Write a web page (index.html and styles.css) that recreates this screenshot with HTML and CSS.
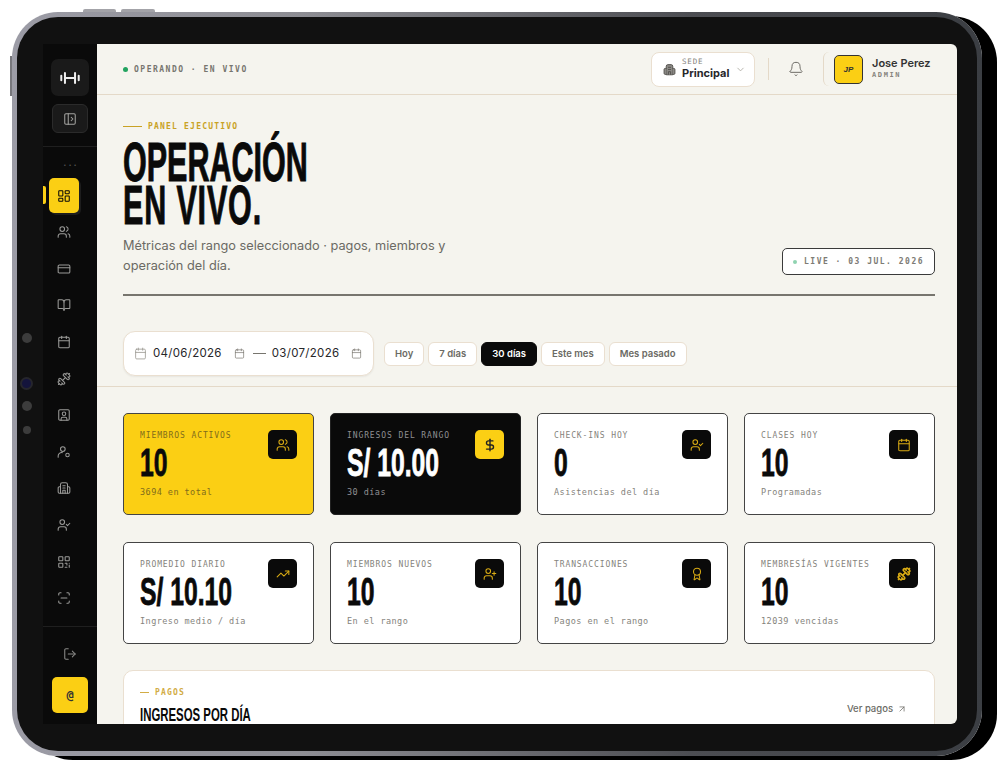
FILE: index.html
```html
<!DOCTYPE html>
<html lang="es">
<head>
  <meta charset="UTF-8" />
  <title>Panel ejecutivo</title>
  <link rel="stylesheet" href="styles.css">
</head>
<body>
  <svg class="sprite" xmlns="http://www.w3.org/2000/svg">
    <symbol id="i-panel" viewBox="0 0 24 24"><rect x="3" y="3" width="18" height="18" rx="2"/><path d="M9 3v18"/><path d="m14 9 3 3-3 3"/></symbol>
    <symbol id="i-dash" viewBox="0 0 24 24"><rect x="3" y="3" width="7" height="9" rx="1"/><rect x="14" y="3" width="7" height="5" rx="1"/><rect x="14" y="12" width="7" height="9" rx="1"/><rect x="3" y="16" width="7" height="5" rx="1"/></symbol>
    <symbol id="i-users" viewBox="0 0 24 24"><path d="M16 21v-2a4 4 0 0 0-4-4H6a4 4 0 0 0-4 4v2"/><circle cx="9" cy="7" r="4"/><path d="M22 21v-2a4 4 0 0 0-3-3.87"/><path d="M16 3.13a4 4 0 0 1 0 7.75"/></symbol>
    <symbol id="i-card" viewBox="0 0 24 24"><rect x="2" y="5" width="20" height="14" rx="2"/><path d="M2 10h20"/></symbol>
    <symbol id="i-book" viewBox="0 0 24 24"><path d="M12 7v14"/><path d="M3 18a1 1 0 0 1-1-1V4a1 1 0 0 1 1-1h5a4 4 0 0 1 4 4 4 4 0 0 1 4-4h5a1 1 0 0 1 1 1v13a1 1 0 0 1-1 1h-6a3 3 0 0 0-3 3 3 3 0 0 0-3-3z"/></symbol>
    <symbol id="i-cal" viewBox="0 0 24 24"><path d="M8 2v4"/><path d="M16 2v4"/><rect x="3" y="4" width="18" height="18" rx="2"/><path d="M3 10h18"/></symbol>
    <symbol id="i-gym" viewBox="0 0 24 24"><path d="M14.4 14.4 9.6 9.6"/><path d="M18.657 21.485a2 2 0 1 1-2.829-2.828l-1.767 1.768a2 2 0 1 1-2.829-2.829l6.364-6.364a2 2 0 1 1 2.829 2.829l-1.768 1.767a2 2 0 1 1 2.828 2.829z"/><path d="m21.5 21.5-1.4-1.4"/><path d="M3.9 3.9 2.5 2.5"/><path d="M6.404 12.768a2 2 0 1 1-2.828-2.829l1.767-1.768a2 2 0 1 1-2.828-2.829l2.828-2.828a2 2 0 1 1 2.829 2.828l1.767-1.768a2 2 0 1 1 2.829 2.829z"/></symbol>
    <symbol id="i-contact" viewBox="0 0 24 24"><rect x="3" y="3" width="18" height="18" rx="2"/><circle cx="12" cy="10" r="3"/><path d="M7 21v-2a3 3 0 0 1 3-3h4a3 3 0 0 1 3 3v2"/></symbol>
    <symbol id="i-cog" viewBox="0 0 24 24"><circle cx="10" cy="7" r="4"/><path d="M2 21v-2a6 6 0 0 1 7-5.9"/><circle cx="18" cy="17" r="3"/></symbol>
    <symbol id="i-build" viewBox="0 0 24 24"><path d="M6 21V6a3 3 0 0 1 3-3h6a3 3 0 0 1 3 3v15z"/><path d="M6 10H4a2 2 0 0 0-2 2v7a2 2 0 0 0 2 2h2"/><path d="M18 10h2a2 2 0 0 1 2 2v7a2 2 0 0 1-2 2h-2"/><path d="M10 8h4M10 12h4M10 21v-5h4v5"/></symbol>
    <symbol id="i-ucheck" viewBox="0 0 24 24"><path d="M16 21v-2a4 4 0 0 0-4-4H6a4 4 0 0 0-4 4v2"/><circle cx="9" cy="7" r="4"/><path d="m16 11 2 2 4-4"/></symbol>
    <symbol id="i-qr" viewBox="0 0 24 24"><rect x="3" y="3" width="7" height="7" rx="1"/><rect x="14" y="3" width="7" height="7" rx="1"/><rect x="3" y="14" width="7" height="7" rx="1"/><path d="M14 14h3v3M21 14v.01M14 21h3M21 17v4"/></symbol>
    <symbol id="i-scan" viewBox="0 0 24 24"><path d="M3 7V5a2 2 0 0 1 2-2h2"/><path d="M17 3h2a2 2 0 0 1 2 2v2"/><path d="M21 17v2a2 2 0 0 1-2 2h-2"/><path d="M7 21H5a2 2 0 0 1-2-2v-2"/><path d="M7 12h10"/></symbol>
    <symbol id="i-logout" viewBox="0 0 24 24"><path d="M9 21H5a2 2 0 0 1-2-2V5a2 2 0 0 1 2-2h4"/><path d="m16 17 5-5-5-5"/><path d="M21 12H9"/></symbol>
    <symbol id="i-bell" viewBox="0 0 24 24"><path d="M10.27 21a2 2 0 0 0 3.46 0"/><path d="M3.26 15.33A1 1 0 0 0 4 17h16a1 1 0 0 0 .74-1.67C19.41 13.96 18 12.5 18 8A6 6 0 0 0 6 8c0 4.5-1.41 5.96-2.74 7.33"/></symbol>
    <symbol id="i-chev" viewBox="0 0 24 24"><path d="m6 9 6 6 6-6"/></symbol>
    <symbol id="i-dollar" viewBox="0 0 24 24"><path d="M12 2v20"/><path d="M17 5H9.5a3.5 3.5 0 0 0 0 7h5a3.5 3.5 0 0 1 0 7H6"/></symbol>
    <symbol id="i-trend" viewBox="0 0 24 24"><path d="m22 7-8.5 8.5-5-5L2 17"/><path d="M16 7h6v6"/></symbol>
    <symbol id="i-uplus" viewBox="0 0 24 24"><path d="M16 21v-2a4 4 0 0 0-4-4H6a4 4 0 0 0-4 4v2"/><circle cx="9" cy="7" r="4"/><path d="M19 8v6M22 11h-6"/></symbol>
    <symbol id="i-award" viewBox="0 0 24 24"><path d="m15.477 12.89 1.515 8.526a.5.5 0 0 1-.81.47l-3.58-2.687a1 1 0 0 0-1.197 0l-3.586 2.686a.5.5 0 0 1-.81-.469l1.514-8.526"/><circle cx="12" cy="8" r="6"/></symbol>
    <symbol id="i-arrow" viewBox="0 0 24 24"><path d="M7 7h10v10"/><path d="M7 17 17 7"/></symbol>
  </svg>

  <div class="device">
    <span class="hw-btn hw-vol-a"></span>
    <span class="hw-btn hw-vol-b"></span>
    <span class="hw-btn hw-side"></span>
    <span class="sensor sensor-a"></span>
    <span class="sensor sensor-cam"></span>
    <span class="sensor sensor-b"></span>
    <span class="sensor sensor-c"></span>

    <div class="screen">
      <aside class="sidebar">
        <div class="side-top">
          <div class="logo-btn">
            <svg class="logo-mark" viewBox="0 0 24 24"><path d="M7 12h10"/><path d="M6.5 6.5v11M17.5 6.5v11"/><path d="M2.5 9.5v5M21.5 9.5v5"/></svg>
          </div>
          <div class="toggle-btn"><svg class="ico"><use href="#i-panel"/></svg></div>
        </div>
        <div class="side-dots">···</div>
        <nav class="side-nav">
          <a class="nav-item active"><svg class="ico"><use href="#i-dash"/></svg></a>
          <a class="nav-item"><svg class="ico"><use href="#i-users"/></svg></a>
          <a class="nav-item"><svg class="ico"><use href="#i-card"/></svg></a>
          <a class="nav-item"><svg class="ico"><use href="#i-book"/></svg></a>
          <a class="nav-item"><svg class="ico"><use href="#i-cal"/></svg></a>
          <a class="nav-item"><svg class="ico flip"><use href="#i-gym"/></svg></a>
          <a class="nav-item"><svg class="ico"><use href="#i-contact"/></svg></a>
          <a class="nav-item"><svg class="ico"><use href="#i-cog"/></svg></a>
          <a class="nav-item"><svg class="ico"><use href="#i-build"/></svg></a>
          <a class="nav-item"><svg class="ico"><use href="#i-ucheck"/></svg></a>
          <a class="nav-item"><svg class="ico"><use href="#i-qr"/></svg></a>
          <a class="nav-item"><svg class="ico"><use href="#i-scan"/></svg></a>
        </nav>
        <div class="side-bottom">
          <a class="nav-item logout"><svg class="ico"><use href="#i-logout"/></svg></a>
          <div class="side-avatar">@</div>
        </div>
      </aside>

      <main class="main">
        <header class="topbar">
          <div class="status"><span class="status-dot"></span>OPERANDO · EN VIVO</div>
          <div class="top-right">
            <div class="sede">
              <svg class="ico sede-ico"><use href="#i-build"/></svg>
              <div class="sede-text">
                <span class="sede-label">SEDE</span>
                <span class="sede-name">Principal</span>
              </div>
              <svg class="ico sede-chev"><use href="#i-chev"/></svg>
            </div>
            <span class="top-sep"></span>
            <svg class="ico bell"><use href="#i-bell"/></svg>
            <div class="user">
              <div class="user-avatar">JP</div>
              <div class="user-text">
                <span class="user-name">Jose Perez</span>
                <span class="user-role">ADMIN</span>
              </div>
            </div>
          </div>
        </header>

        <section class="hero">
          <div class="eyebrow"><span class="eyebrow-line"></span>PANEL EJECUTIVO</div>
          <h1 class="hero-title"><span>OPERACIÓN</span><span>EN VIVO.</span></h1>
          <div class="hero-foot">
            <p class="hero-text">Métricas del rango seleccionado · pagos, miembros y operación del día.</p>
            <div class="live"><span class="live-dot"></span>LIVE · 03 JUL. 2026</div>
          </div>
        </section>

        <section class="filters">
          <div class="date-range">
            <svg class="ico date-ico"><use href="#i-cal"/></svg>
            <span class="date-val">04/06/2026</span>
            <svg class="ico date-mini"><use href="#i-cal"/></svg>
            <span class="date-dash"></span>
            <span class="date-val">03/07/2026</span>
            <svg class="ico date-mini"><use href="#i-cal"/></svg>
          </div>
          <div class="presets">
            <button class="preset">Hoy</button>
            <button class="preset">7 días</button>
            <button class="preset on">30 días</button>
            <button class="preset">Este mes</button>
            <button class="preset">Mes pasado</button>
          </div>
        </section>

        <section class="kpis">
          <article class="kpi yellow">
            <div class="kpi-label">MIEMBROS ACTIVOS</div>
            <div class="kpi-value">10</div>
            <div class="kpi-sub">3694 en total</div>
            <span class="kpi-icon"><svg class="ico"><use href="#i-users"/></svg></span>
          </article>
          <article class="kpi dark">
            <div class="kpi-label">INGRESOS DEL RANGO</div>
            <div class="kpi-value">S/ 10.00</div>
            <div class="kpi-sub">30 días</div>
            <span class="kpi-icon"><svg class="ico"><use href="#i-dollar"/></svg></span>
          </article>
          <article class="kpi">
            <div class="kpi-label">CHECK-INS HOY</div>
            <div class="kpi-value">0</div>
            <div class="kpi-sub">Asistencias del día</div>
            <span class="kpi-icon"><svg class="ico"><use href="#i-ucheck"/></svg></span>
          </article>
          <article class="kpi">
            <div class="kpi-label">CLASES HOY</div>
            <div class="kpi-value">10</div>
            <div class="kpi-sub">Programadas</div>
            <span class="kpi-icon"><svg class="ico"><use href="#i-cal"/></svg></span>
          </article>
          <article class="kpi">
            <div class="kpi-label">PROMEDIO DIARIO</div>
            <div class="kpi-value">S/ 10.10</div>
            <div class="kpi-sub">Ingreso medio / día</div>
            <span class="kpi-icon"><svg class="ico"><use href="#i-trend"/></svg></span>
          </article>
          <article class="kpi">
            <div class="kpi-label">MIEMBROS NUEVOS</div>
            <div class="kpi-value">10</div>
            <div class="kpi-sub">En el rango</div>
            <span class="kpi-icon"><svg class="ico"><use href="#i-uplus"/></svg></span>
          </article>
          <article class="kpi">
            <div class="kpi-label">TRANSACCIONES</div>
            <div class="kpi-value">10</div>
            <div class="kpi-sub">Pagos en el rango</div>
            <span class="kpi-icon"><svg class="ico"><use href="#i-award"/></svg></span>
          </article>
          <article class="kpi">
            <div class="kpi-label">MEMBRESÍAS VIGENTES</div>
            <div class="kpi-value">10</div>
            <div class="kpi-sub">12039 vencidas</div>
            <span class="kpi-icon"><svg class="ico flip thick"><use href="#i-gym"/></svg></span>
          </article>
        </section>

        <section class="panel">
          <div class="panel-head">
            <div>
              <div class="panel-tag"><span class="panel-tag-line"></span>PAGOS</div>
              <h2 class="panel-title">INGRESOS POR DÍA</h2>
            </div>
            <a class="panel-link">Ver pagos <svg class="ico"><use href="#i-arrow"/></svg></a>
          </div>
        </section>
      </main>
    </div>
  </div>
</body>
</html>
```

FILE: styles.css
```css
* {
  box-sizing: border-box;
}

body {
  margin: 0;
  width: 1000px;
  height: 770px;
  overflow: hidden;
  background: #fff;
  font-family: 'Inter', sans-serif;
  color: #0a0a0a;
}

.sprite {
  display: none;
}

.ico {
  display: block;
  width: 14px;
  height: 14px;
  fill: none;
  stroke: currentColor;
  stroke-width: 1.8;
  stroke-linecap: round;
  stroke-linejoin: round;
}

.flip {
  transform: scaleX(-1);
}

.thick {
  stroke-width: 2.8;
}

/* device frame */
.device {
  position: absolute;
  left: 12px;
  top: 12px;
  width: 970px;
  height: 744px;
  padding: 27px 20px 27px 26px;
  background: linear-gradient(#111, #111) padding-box,
    linear-gradient(90deg, #9c9ca6 0, #8d8d93 30%, #4c4d52 70%, #3b3e43 100%) border-box;
  border: 5px solid transparent;
  border-radius: 46px;
  box-shadow: 15px 4px 0 #000;
}

.hw-btn {
  position: absolute;
  background: #a3a3a8;
}

.hw-vol-a {
  left: 66px;
  top: -8px;
  width: 33px;
  height: 3px;
  border-radius: 2px 2px 0 0;
}

.hw-vol-b {
  left: 104px;
  top: -8px;
  width: 34px;
  height: 3px;
  border-radius: 2px 2px 0 0;
}

.hw-side {
  left: -7px;
  top: 39px;
  width: 2px;
  height: 40px;
  background: #77777c;
}

.sensor {
  position: absolute;
  left: 5px;
  width: 10px;
  height: 10px;
  border-radius: 50%;
  background: #3c3c3c;
}

.sensor-a { top: 316px; }
.sensor-b { top: 384px; }

.sensor-c {
  top: 409px;
  left: 6px;
  width: 8px;
  height: 8px;
}

.sensor-cam {
  top: 360px;
  left: 3px;
  width: 13px;
  height: 13px;
  background: #14143c;
  border: 2px solid #26262c;
}

.screen {
  display: flex;
  height: 100%;
  overflow: hidden;
  border-radius: 0 6px 6px 0;
  background: #f5f4ee;
}

/* sidebar */
.sidebar {
  flex: 0 0 54px;
  display: flex;
  flex-direction: column;
  background: #0a0a0a;
  color: #a3a3a0;
}

.side-top {
  flex: none;
  display: flex;
  flex-direction: column;
  align-items: center;
  gap: 8px;
  height: 103px;
  padding: 15px 0 0 0;
  border-bottom: 1px solid #1f1f1f;
}

.logo-btn {
  display: flex;
  align-items: center;
  justify-content: center;
  width: 38px;
  height: 37px;
  background: #1a1a1a;
  border-radius: 7px;
}

.logo-mark {
  width: 22px;
  height: 22px;
  fill: none;
  stroke: #eee;
  stroke-width: 2.2;
  stroke-linecap: round;
}

.toggle-btn {
  display: flex;
  align-items: center;
  justify-content: center;
  width: 36px;
  height: 29px;
  background: #1a1a1a;
  border: 1px solid #2b2b2b;
  border-radius: 6px;
}

.side-dots {
  flex: none;
  height: 31px;
  padding: 10px 0 0 2px;
  text-align: center;
  font-size: 11px;
  line-height: 16px;
  letter-spacing: 2px;
  color: #555;
}

.side-nav {
  flex: none;
  display: flex;
  flex-direction: column;
  align-items: center;
  height: 448px;
  padding-right: 12px;
}

.nav-item {
  position: relative;
  display: flex;
  align-items: center;
  justify-content: center;
  flex: 0 0 36.6px;
  width: 30px;
  color: #9a9a98;
}

.nav-item.active {
  flex-basis: 35px;
  margin-bottom: 1px;
  color: #0a0a0a;
  background: #fbcf14;
  border-radius: 5px;
  box-shadow: 2px 2px 0 #1d1d1d;
}

.nav-item.active::before {
  content: "";
  position: absolute;
  left: -6px;
  top: 8px;
  width: 3px;
  height: 18px;
  background: #fbcf14;
  border-radius: 0 2px 2px 0;
}

.side-bottom {
  display: flex;
  flex-direction: column;
  align-items: center;
  flex: 1;
  border-top: 1px solid #1f1f1f;
}

.logout {
  flex: 0 0 50px;
  padding-top: 4px;
  color: #8a8a88;
}

.side-avatar {
  width: 36px;
  height: 36px;
  line-height: 36px;
  text-align: center;
  background: #fbcf14;
  border-radius: 5px;
  font-family: 'DejaVu Sans Mono', monospace;
  font-size: 12px;
  font-weight: 700;
  color: #333;
}

/* main */
.main {
  flex: 1;
  min-width: 0;
  display: flex;
  flex-direction: column;
}

.topbar {
  flex: 0 0 51px;
  display: flex;
  align-items: center;
  justify-content: space-between;
  padding: 0 26px;
  border-bottom: 1px solid #e4d9c8;
}

.status {
  display: flex;
  align-items: center;
  font-family: 'DejaVu Sans Mono', monospace;
  font-size: 8px;
  font-weight: 700;
  letter-spacing: 1.5px;
  color: #77756e;
}

.status-dot {
  width: 5px;
  height: 5px;
  margin-right: 6px;
  background: #22a35f;
  border-radius: 50%;
}

.top-right {
  display: flex;
  align-items: center;
  margin-right: -4px;
}

.sede {
  display: flex;
  align-items: center;
  width: 104px;
  height: 35px;
  padding-left: 11px;
  background: #fff;
  border: 1.5px solid #eadfd0;
  border-radius: 8px;
}

.sede-ico {
  width: 13px;
  height: 13px;
  color: #55534f;
  fill: #8a8884;
}

.sede-text {
  display: flex;
  flex-direction: column;
  margin: -1px 0 0 6px;
}

.sede-label {
  font-family: 'DejaVu Sans Mono', monospace;
  font-size: 7.5px;
  line-height: 9px;
  letter-spacing: .8px;
  color: #85837c;
}

.sede-name {
  font-size: 11px;
  line-height: 14px;
  font-weight: 700;
  color: #27272a;
}

.sede-chev {
  width: 11px;
  height: 11px;
  margin-left: 6px;
  color: #aaa79f;
}

.top-sep {
  width: 1px;
  height: 22px;
  margin-left: 13px;
  background: #e4d9c8;
}

.bell {
  width: 16px;
  height: 16px;
  margin: 0 19px;
  stroke-width: 1.5;
  color: #6e6c66;
}

.user {
  display: flex;
  align-items: center;
  height: 34px;
  padding-left: 10px;
  border-left: 1px solid #e4d9c8;
  border-radius: 6px 0 0 6px;
  width: 112px;
}

.user-avatar {
  width: 29px;
  height: 29px;
  line-height: 27px;
  text-align: center;
  background: #fbcf14;
  border: 1px solid #333;
  border-radius: 5px;
  font-family: 'Liberation Sans', sans-serif;
  font-style: italic;
  font-size: 8px;
  font-weight: 700;
  color: #333;
}

.user-text {
  display: flex;
  flex-direction: column;
  margin: -1px 0 0 9px;
}

.user-name {
  font-size: 11px;
  line-height: 14px;
  font-weight: 600;
  color: #333;
  white-space: nowrap;
}

.user-role {
  font-family: 'DejaVu Sans Mono', monospace;
  font-size: 7px;
  line-height: 11px;
  font-weight: 700;
  letter-spacing: 1.6px;
  color: #85837c;
}

/* hero */
.hero {
  flex: none;
  margin: 0 22px 0 26px;
  padding-top: 26px;
  height: 201px;
  border-bottom: 2px solid #77756e;
}

.eyebrow {
  display: flex;
  align-items: center;
  font-family: 'DejaVu Sans Mono', monospace;
  font-size: 8px;
  line-height: 11px;
  font-weight: 700;
  letter-spacing: 1.2px;
  color: #c9a225;
}

.eyebrow-line {
  width: 19px;
  height: 1px;
  margin-right: 6px;
  background: #c9a225;
}

.hero-title {
  margin: 9px 0 0;
  font-family: 'Liberation Sans', sans-serif;
  font-size: 55px;
  line-height: 43px;
  font-weight: 700;
  color: #0a0a0a;
  -webkit-text-stroke: 1px #0a0a0a;
  transform: scaleX(.555);
  transform-origin: left;
}

.hero-title span {
  display: block;
}

.hero-title span + span {
  letter-spacing: 1.5px;
}

.hero-foot {
  display: flex;
  align-items: flex-end;
  justify-content: space-between;
  margin-top: 9px;
}

.hero-text {
  width: 340px;
  margin: 0;
  font-size: 12.75px;
  line-height: 20px;
  color: #6b6a64;
}

.live {
  display: flex;
  align-items: center;
  width: 153px;
  height: 27px;
  margin-bottom: 1px;
  padding-left: 10px;
  background: #fff;
  border: 1.5px solid #3a3a3a;
  border-radius: 5px;
  font-family: 'DejaVu Sans Mono', monospace;
  font-size: 8px;
  font-weight: 700;
  letter-spacing: 1.5px;
  color: #7d7b75;
}

.live-dot {
  width: 4px;
  height: 4px;
  margin-right: 7px;
  background: #8fd3b0;
  border-radius: 50%;
}

/* filters */
.filters {
  flex: none;
  display: flex;
  align-items: center;
  gap: 10px;
  height: 91px;
  padding: 24px 22px 0 26px;
  border-bottom: 1px solid #e4d9c8;
}

.date-range {
  display: flex;
  align-items: center;
  width: 251px;
  height: 45px;
  padding-left: 10px;
  background: #fff;
  border: 1.5px solid #eadfd0;
  border-radius: 12px;
  box-shadow: 0 1px 2px rgba(0, 0, 0, .06);
}

.date-ico {
  width: 13px;
  height: 13px;
  margin-right: 6px;
  stroke-width: 1.5;
  color: #9a9890;
}

.date-mini {
  width: 11px;
  height: 11px;
  margin: 0 8px 0 12px;
  stroke-width: 1.5;
  color: #77756e;
}

.date-dash {
  width: 13px;
  height: 1px;
  margin-right: 6px;
  background: #77756e;
}

.date-val {
  font-size: 11.5px;
  letter-spacing: .3px;
  color: #27272a;
}

.presets {
  display: flex;
  gap: 4px;
  margin-top: 1px;
}

.preset {
  height: 24px;
  padding: 0 10px;
  background: #fff;
  border: 1.5px solid #eadfd0;
  border-radius: 6px;
  font-family: 'Inter', sans-serif;
  font-size: 9.5px;
  font-weight: 600;
  color: #6b6a64;
}

.preset.on {
  background: #0a0a0a;
  border-color: #0a0a0a;
  color: #fff;
}

/* kpi cards */
.kpis {
  flex: none;
  display: grid;
  grid-template-columns: repeat(4, 191px);
  grid-auto-rows: 102px;
  column-gap: 16px;
  row-gap: 27px;
  margin: 26px 22px 0 26px;
}

.kpi {
  position: relative;
  padding: 17px 16px 0;
  background: #fff;
  border: 1.5px solid #444;
  border-radius: 5px;
}

.kpi-label {
  font-family: 'DejaVu Sans Mono', monospace;
  font-size: 8px;
  line-height: 10px;
  letter-spacing: .9px;
  color: #85837c;
}

.kpi-value {
  margin-top: 5px;
  font-family: 'Liberation Sans', sans-serif;
  font-size: 38px;
  line-height: 34px;
  font-weight: 700;
  white-space: nowrap;
  color: #0a0a0a;
  -webkit-text-stroke: .8px currentColor;
  transform: scaleX(.65);
  transform-origin: left;
}

.kpi-sub {
  margin-top: 6px;
  font-family: 'DejaVu Sans Mono', monospace;
  font-size: 8.5px;
  line-height: 12px;
  letter-spacing: .45px;
  color: #85837c;
}

.kpi-icon {
  position: absolute;
  top: 16px;
  right: 16px;
  display: flex;
  align-items: center;
  justify-content: center;
  width: 29px;
  height: 29px;
  background: #0a0a0a;
  border-radius: 5px;
  color: #d9ab14;
}

.kpi.yellow {
  background: #fbcf14;
}

.kpi.yellow .kpi-label,
.kpi.yellow .kpi-sub {
  color: #7f6c1c;
}

.kpi.dark {
  background: #0a0a0a;
  border-color: #222;
}

.kpi.dark .kpi-label,
.kpi.dark .kpi-sub {
  color: #8f8f92;
}

.kpi.dark .kpi-value {
  color: #fff;
}

.kpi.dark .kpi-icon {
  background: #fbcf14;
  color: #222;
}

.kpi.dark .ico {
  stroke-width: 2.4;
}

/* panel below the fold */
.panel {
  flex: none;
  margin: 26px 22px 0 26px;
  height: 120px;
  padding: 16px 27px 0 16px;
  background: #fff;
  border: 1.5px solid #eadfd0;
  border-radius: 10px;
}

.panel-head {
  display: flex;
  justify-content: space-between;
  align-items: flex-start;
}

.panel-tag {
  display: flex;
  align-items: center;
  font-family: 'DejaVu Sans Mono', monospace;
  font-size: 8px;
  line-height: 11px;
  font-weight: 700;
  letter-spacing: 1.2px;
  color: #d2ac45;
}

.panel-tag-line {
  width: 9px;
  height: 1.5px;
  margin-right: 6px;
  background: #d2ac45;
}

.panel-title {
  margin: 7px 0 0;
  font-family: 'Liberation Sans', sans-serif;
  font-size: 19px;
  line-height: 20px;
  font-weight: 700;
  color: #0a0a0a;
  transform: scaleX(.6);
  transform-origin: left;
}

.panel-link {
  display: flex;
  align-items: center;
  gap: 4px;
  margin-top: 16px;
  font-size: 9.5px;
  font-weight: 500;
  color: #6b6a64;
}

.panel-link .ico {
  width: 10px;
  height: 10px;
}
```
